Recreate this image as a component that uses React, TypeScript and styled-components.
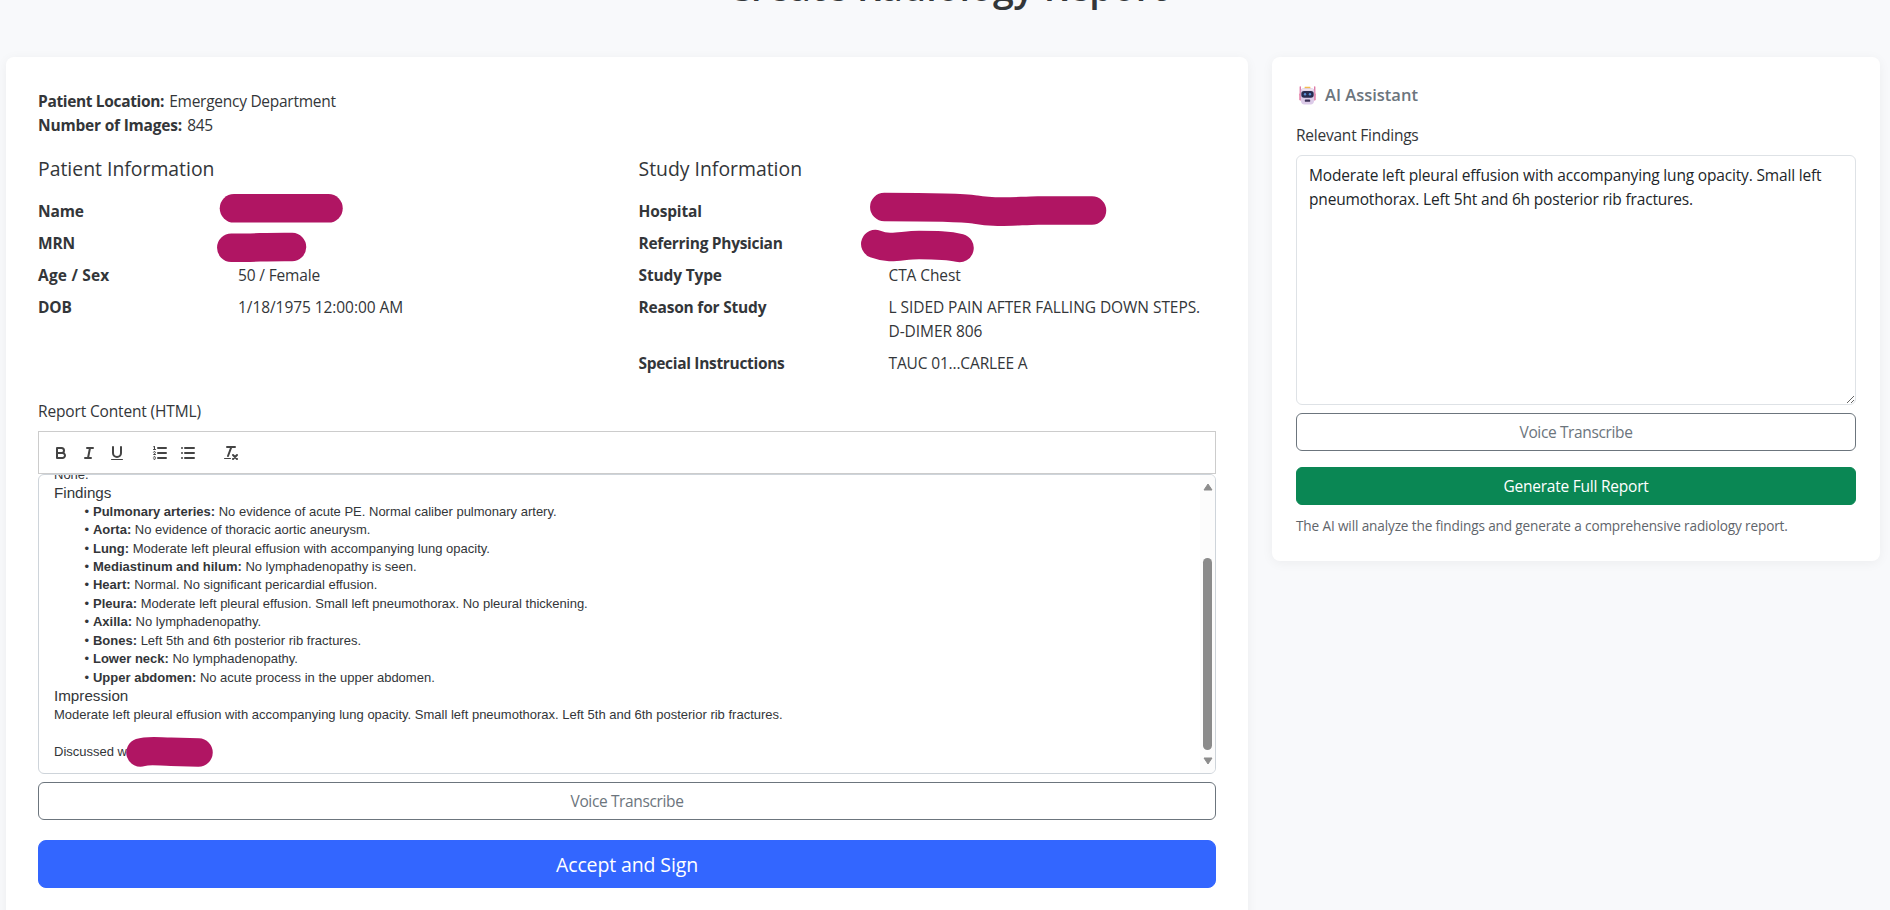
import React from "react";
import styled, { createGlobalStyle } from "styled-components";

const GlobalStyle = createGlobalStyle`
  *, *::before, *::after { box-sizing: border-box; }
  html, body { margin: 0; height: 100%; overflow: hidden; }
  body {
    background: #f8f9fb;
    color: #333639;
    font-family: "Open Sans", "Noto Sans", sans-serif;
    font-size: 15.5px;
    line-height: 24px;
  }
`;

const Page = styled.div`
  height: 910px;
  overflow: hidden;
  padding: 0 10px 0 6px;
`;

const PageTitle = styled.h1`
  margin: -37px 0 46px 8px;
  height: 48px;
  font-size: 37.6px;
  font-weight: 600;
  line-height: 48px;
  text-align: center;
`;

const Columns = styled.main`
  display: grid;
  grid-template-columns: 1242px 608px;
  gap: 24px;
  align-items: start;
`;

const Card = styled.section<{ $pad: string }>`
  padding: ${(p) => p.$pad};
  background: #fff;
  border-radius: 8px;
  box-shadow: 0 2px 12px rgba(0, 0, 0, 0.05);
`;

const Text = styled.span<{ $ls?: number }>`
  letter-spacing: ${(p) => p.$ls ?? -0.15}px;
  white-space: pre;
`;

const Strong = styled(Text)`
  font-weight: 700;
`;

const SummaryLine = styled.div`
  display: flex;
  gap: 5.2px;
`;

const InfoGrid = styled.div`
  display: grid;
  grid-template-columns: 576.5px 577px;
  gap: 24px;
  margin-top: 20px;
`;

const InfoHeading = styled.h2`
  margin: 0 0 18px;
  font-size: 19.4px;
  font-weight: 500;
  line-height: 24px;
`;

const FieldList = styled.dl<{ $label: number }>`
  display: grid;
  grid-template-columns: ${(p) => p.$label}px 1fr;
  row-gap: 8px;
  margin: 0;
`;

const FieldLabel = styled.dt`
  font-weight: 700;
`;

const FieldValue = styled.dd`
  position: relative;
  margin: 0;
  min-height: 24px;
`;

const Redaction = styled.svg<{ $x: number; $y: number }>`
  position: absolute;
  left: ${(p) => p.$x}px;
  top: ${(p) => p.$y}px;
  overflow: visible;
  fill: none;
  stroke: #b01563;
  stroke-width: 28.5;
  stroke-linecap: round;
  stroke-linejoin: round;
`;

const Label = styled.div<{ $top: number }>`
  margin: ${(p) => p.$top}px 0 8px;
`;

const Toolbar = styled.div`
  display: flex;
  height: 43px;
  padding: 9px 8px 8px;
  border: 1px solid #ccc;
`;

const ToolGroup = styled.div`
  display: flex;
  margin-right: 15px;
`;

const ToolButton = styled.button`
  width: 28px;
  height: 24px;
  padding: 3px 5px;
  border: 0;
  background: none;
  svg {
    display: block;
    width: 18px;
    height: 18px;
    fill: none;
    stroke: #444;
    stroke-width: 2;
    stroke-linecap: round;
    stroke-linejoin: round;
  }
  .fill { fill: #444; stroke: none; }
  .thin { stroke-width: 1; }
`;

const Editor = styled.div`
  display: flex;
  height: 300px;
  border: 1px solid #ced4da;
  border-radius: 6px;
  overflow: hidden;
`;

const EditorContent = styled.div`
  flex: 1;
  display: flex;
  flex-direction: column;
  justify-content: flex-end;
  padding: 12px 15px;
  font-family: "Liberation Sans", Arial, sans-serif;
  font-size: 13px;
  line-height: 18.46px;
`;

const Paragraph = styled.div`
  position: relative;
  flex: none;
  min-height: 18.46px;
`;

const SectionName = styled(Paragraph)`
  font-size: 15.2px;
`;

const FindingList = styled.ul`
  flex: none;
  margin: 0;
  padding: 0 0 0 19.5px;
  list-style: none;
`;

const Finding = styled.li`
  display: flex;
  white-space: pre;
  &::before {
    content: "•";
    width: 15.6px;
    margin-right: 3.9px;
    text-align: right;
  }
`;

const FindingName = styled.b`
  margin-right: 3.6px;
`;

const ScrollTrack = styled.div`
  flex: none;
  display: flex;
  flex-direction: column;
  align-items: center;
  width: 15px;
  padding: 8px 0;
  background: #fcfcfc;
`;

const ScrollArrow = styled.svg`
  display: block;
  width: 10px;
  height: 8px;
  fill: #8b8b8b;
  stroke: #8b8b8b;
  stroke-width: 1;
  stroke-linejoin: round;
`;

const ScrollThumb = styled.div`
  width: 9px;
  height: 192px;
  margin: 67px 0 7px;
  border-radius: 5px;
  background: #8b8b8b;
`;

const Button = styled.button<{ $kind: "outline" | "success" | "primary"; $top: number }>`
  display: block;
  width: 100%;
  height: ${(p) => (p.$kind === "primary" ? 48 : 38)}px;
  margin-top: ${(p) => p.$top}px;
  padding: ${(p) => (p.$kind === "primary" ? "2px 0 0" : "0")};
  border: 1px solid
    ${(p) => ({ outline: "#6c757d", success: "#0a8754", primary: "#3366ff" })[p.$kind]};
  border-radius: ${(p) => (p.$kind === "primary" ? 8 : 6)}px;
  background: ${(p) => ({ outline: "#fff", success: "#0a8754", primary: "#3366ff" })[p.$kind]};
  color: ${(p) => (p.$kind === "outline" ? "#6c757d" : "#fff")};
  font: inherit;
  font-size: ${(p) => (p.$kind === "primary" ? 19.5 : 15.5)}px;
`;

const AssistantTitle = styled.h2`
  display: flex;
  align-items: center;
  gap: 8px;
  margin: 2px 0 16px;
  padding-left: 2px;
  color: #6c757d;
  font-size: 16.5px;
  font-weight: 600;
  line-height: 24px;
`;

const FindingsInput = styled.textarea`
  display: block;
  width: 100%;
  height: 250px;
  padding: 7px 12px;
  border: 1px solid #dee2e6;
  border-radius: 6px;
  outline: 0;
  background: #fff;
  color: #212529;
  font: inherit;
  letter-spacing: -0.17px;
  resize: vertical;
`;

const Hint = styled.div`
  margin-top: 10px;
  color: #5f656b;
  font-size: 13.6px;
  line-height: 21px;
`;

const RobotIcon = () => (
  <svg width="19" height="20" viewBox="0 0 19 22">
    <path d="M1.500 2v9M17.500 2v9" stroke="#d6568f" strokeWidth="1.2" strokeLinecap="round" />
    <rect x="0.500" y="9" width="3" height="8" rx="1.4" fill="#e2759f" />
    <rect x="15.500" y="9" width="3" height="8" rx="1.4" fill="#e2759f" />
    <path d="M6 4.500 6.500 2h6l.5 2.500z" fill="#f3bd4f" />
    <path d="M5 3.500h9q3 0 3 3v9q0 6-3.500 6h-8Q2 21.500 2 15.500v-9q0-3 3-3z" fill="#dccbe8" />
    <path d="M5 4h9q2 0 2 2H3q0-2 2-2z" fill="#f0e3f1" />
    <rect x="2.700" y="6.500" width="13.600" height="7.500" rx="3" fill="#292b50" />
    <circle cx="6.800" cy="10.200" r="1.300" fill="#5c8fd6" />
    <circle cx="12.200" cy="10.200" r="1.300" fill="#5c8fd6" />
    <rect x="6.500" y="16" width="6" height="2.500" rx="1" fill="#3d3157" />
  </svg>
);

const patientFields = [
  { label: "Name", redact: { x: -18, y: -5, d: "M14 14.300H108.500" } },
  { label: "MRN", redact: { x: -21, y: 1, d: "M14.300 15.700C35 16 54 14.500 75 15" } },
  { label: "Age / Sex", ls: 0.2, value: "50 / Female", vls: -0.15 },
  { label: "DOB", value: "1/18/1975 12:00:00 AM", vls: -0.07 },
];

const studyFields = [
  {
    label: "Hospital",
    redact: { x: -18.5, y: -6, d: "M14.300 14C50 14 90 14.300 105 16.500C125 20.500 145 18 168 17.500H222" },
  },
  {
    label: "Referring Physician",
    ls: -0.3,
    redact: { x: -27.5, y: -1, d: "M14.300 14C30 20 40 15 58 15C75 15 87 15 98.500 18" },
  },
  { label: "Study Type", value: "CTA Chest", vls: -0.1 },
  {
    label: "Reason for Study",
    ls: -0.2,
    value: "L SIDED PAIN AFTER FALLING DOWN STEPS.\nD-DIMER 806",
    vls: -0.06,
  },
  { label: "Special Instructions", ls: -0.31, value: "TAUC 01...CARLEE A", vls: -0.15 },
];

type Field = {
  label: string;
  ls?: number;
  value?: string;
  vls?: number;
  redact?: { x: number; y: number; d: string };
};

const Fields = ({ fields, labelWidth }: { fields: Field[]; labelWidth: number }) => (
  <FieldList $label={labelWidth}>
    {fields.map((f) => (
      <React.Fragment key={f.label}>
        <FieldLabel>
          <Text $ls={f.ls}>{f.label}</Text>
        </FieldLabel>
        <FieldValue>
          {f.value && <Text $ls={f.vls}>{f.value}</Text>}
          {f.redact && (
            <Redaction $x={f.redact.x} $y={f.redact.y} width="10" height="10">
              <path d={f.redact.d} />
            </Redaction>
          )}
        </FieldValue>
      </React.Fragment>
    ))}
  </FieldList>
);

const findings = [
  ["Pulmonary arteries:", "No evidence of acute PE. Normal caliber pulmonary artery."],
  ["Aorta:", "No evidence of thoracic aortic aneurysm."],
  ["Lung:", "Moderate left pleural effusion with accompanying lung opacity."],
  ["Mediastinum and hilum:", "No lymphadenopathy is seen."],
  ["Heart:", "Normal. No significant pericardial effusion."],
  ["Pleura:", "Moderate left pleural effusion. Small left pneumothorax. No pleural thickening."],
  ["Axilla:", "No lymphadenopathy."],
  ["Bones:", "Left 5th and 6th posterior rib fractures."],
  ["Lower neck:", "No lymphadenopathy."],
  ["Upper abdomen:", "No acute process in the upper abdomen."],
];

const EditorToolbar = () => (
  <Toolbar>
    <ToolGroup>
      <ToolButton aria-label="Bold">
        <svg viewBox="0 0 18 18">
          <path d="M5,4H9.500A2.500,2.500,0,0,1,12,6.500v0A2.500,2.500,0,0,1,9.500,9H5Z" />
          <path d="M5,9h5.500A2.500,2.500,0,0,1,13,11.500v0A2.500,2.500,0,0,1,10.500,14H5Z" />
        </svg>
      </ToolButton>
      <ToolButton aria-label="Italic">
        <svg viewBox="0 0 18 18">
          <path d="M7 4H13M5 14H11M8 14L10 4" />
        </svg>
      </ToolButton>
      <ToolButton aria-label="Underline">
        <svg viewBox="0 0 18 18">
          <path d="M5,3V9a4.012,4.012,0,0,0,4,4H9a4.012,4.012,0,0,0,4-4V3" />
          <rect className="fill" height="1" rx="0.5" width="12" x="3" y="15" />
        </svg>
      </ToolButton>
    </ToolGroup>
    <ToolGroup>
      <ToolButton aria-label="Ordered list">
        <svg viewBox="0 0 18 18">
          <path d="M7 4H15M7 9H15M7 14H15" />
          <path className="thin" d="M2.500 5.500H4.500" />
          <path
            className="fill"
            d="M3.500,6A0.500,0.500,0,0,1,3,5.500V3.085l-0.276.138A0.500,0.500,0,0,1,2.053,3c-0.124-.247-0.023-0.324.224-0.447l1-.5A0.500,0.500,0,0,1,4,2.500v3A0.500,0.500,0,0,1,3.500,6Z"
          />
          <path className="thin" d="M4.500,10.500h-2c0-.234,1.850-1.076,1.850-2.234A0.959,0.959,0,0,0,2.500,8.156" />
          <path
            className="thin"
            d="M2.500,14.846a0.959,0.959,0,0,0,1.850-.109A0.700,0.700,0,0,0,3.750,14a0.688,0.688,0,0,0,.6-0.736,0.959,0.959,0,0,0-1.850-.109"
          />
        </svg>
      </ToolButton>
      <ToolButton aria-label="Bullet list">
        <svg viewBox="0 0 18 18">
          <path d="M6 4H15M6 9H15M6 14H15M3 4H3M3 9H3M3 14H3" />
        </svg>
      </ToolButton>
    </ToolGroup>
    <ToolGroup>
      <ToolButton aria-label="Clear formatting">
        <svg viewBox="0 0 18 18">
          <path d="M5 3H13M6 12L9.350 3M11 11L15 15M15 11L11 15" />
          <rect className="fill" height="1" rx="0.5" width="7" x="2" y="14" />
        </svg>
      </ToolButton>
    </ToolGroup>
  </Toolbar>
);

const ReportEditor = () => (
  <Editor>
    <EditorContent>
      <Paragraph>None.</Paragraph>
      <SectionName>Findings</SectionName>
      <FindingList>
        {findings.map(([name, text]) => (
          <Finding key={name}>
            <FindingName>{name}</FindingName>
            {text}
          </Finding>
        ))}
      </FindingList>
      <SectionName>Impression</SectionName>
      <Paragraph>
        Moderate left pleural effusion with accompanying lung opacity. Small left pneumothorax. Left
        5th and 6th posterior rib fractures.
      </Paragraph>
      <Paragraph />
      <Paragraph>
        Discussed w
        <Redaction $x={72} $y={-6} width="10" height="10">
          <path d="M14.500 15.500C22 13 30 14.300 45 14.800L72.500 15.500" />
        </Redaction>
      </Paragraph>
    </EditorContent>
    <ScrollTrack>
      <ScrollArrow viewBox="0 0 10 8">
        <path d="M5 1 9 7H1z" />
      </ScrollArrow>
      <ScrollThumb />
      <ScrollArrow viewBox="0 0 10 8">
        <path d="M5 7 9 1H1z" />
      </ScrollArrow>
    </ScrollTrack>
  </Editor>
);

export default function App() {
  return (
    <Page>
      <GlobalStyle />
      <PageTitle>Create Radiology Report</PageTitle>
      <Columns>
        <Card $pad="32px 32px 60px">
          <SummaryLine>
            <Strong $ls={-0.35}>Patient Location:</Strong>
            <Text $ls={-0.27}>Emergency Department</Text>
          </SummaryLine>
          <SummaryLine>
            <Strong $ls={-0.2}>Number of Images:</Strong>
            <Text $ls={-0.35}>845</Text>
          </SummaryLine>
          <InfoGrid>
            <div>
              <InfoHeading>Patient Information</InfoHeading>
              <Fields fields={patientFields} labelWidth={200} />
            </div>
            <div>
              <InfoHeading>Study Information</InfoHeading>
              <Fields fields={studyFields} labelWidth={250} />
            </div>
          </InfoGrid>
          <Label $top={24}>
            <Text>Report Content (HTML)</Text>
          </Label>
          <EditorToolbar />
          <ReportEditor />
          <Button $kind="outline" $top={8}>
            <Text $ls={-0.37}>Voice Transcribe</Text>
          </Button>
          <Button $kind="primary" $top={20}>
            <Text $ls={-0.12}>Accept and Sign</Text>
          </Button>
        </Card>
        <Card $pad="24px 24px 25px">
          <AssistantTitle>
            <RobotIcon />
            AI Assistant
          </AssistantTitle>
          <Label $top={0}>
            <Text $ls={-0.23}>Relevant Findings</Text>
          </Label>
          <FindingsInput
            spellCheck={false}
            defaultValue="Moderate left pleural effusion with accompanying lung opacity. Small left pneumothorax. Left 5ht and 6h posterior rib fractures."
          />
          <Button $kind="outline" $top={8}>
            <Text $ls={-0.37}>Voice Transcribe</Text>
          </Button>
          <Button $kind="success" $top={16}>
            <Text $ls={-0.23}>Generate Full Report</Text>
          </Button>
          <Hint>
            <Text $ls={-0.137}>
              The AI will analyze the findings and generate a comprehensive radiology report.
            </Text>
          </Hint>
        </Card>
      </Columns>
    </Page>
  );
}
